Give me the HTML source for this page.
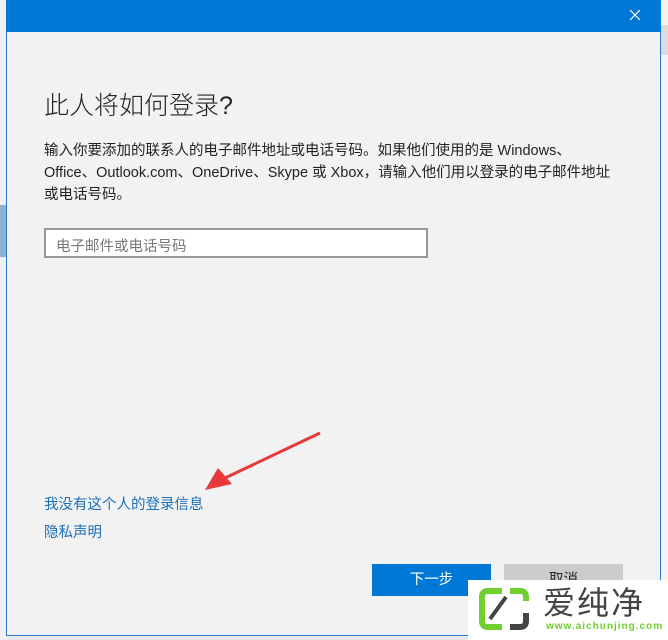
<!DOCTYPE html>
<html><head><meta charset="utf-8"><style>
body{margin:0;width:668px;height:640px;overflow:hidden;background:#e9e9e9;position:relative;font-family:"Liberation Sans","Noto Sans CJK SC",sans-serif}
.abs{position:absolute}
</style></head><body>
<div class="abs" style="left:0;top:0;width:7px;height:640px;background:#f0f0f0"></div>
<div class="abs" style="left:0;top:205px;width:7px;height:52px;background:#8fb0d6"></div>
<div class="abs" style="left:661px;top:0;width:7px;height:640px;background:#f4f4f4"></div>
<div class="abs" style="left:661px;top:25px;width:7px;height:30px;background:#ddd"></div>
<div class="abs" style="left:6px;top:0;width:655px;height:636px;background:#f2f2f2;border:1px solid #2b79c9;box-sizing:border-box"></div>
<div class="abs" style="left:6px;top:0;width:655px;height:32px;background:#0078d7"></div>
<svg class="abs" style="left:629px;top:9px" width="12" height="12"><path d="M1 1L11 11M11 1L1 11" stroke="#fff" stroke-width="1.2"/></svg>
<div class="abs" style="left:44px;top:86px;font-size:25px;color:#222;font-weight:300">此人将如何登录?</div>
<div class="abs" style="left:44px;top:140px;font-size:14.5px;line-height:22px;color:#222;white-space:nowrap">输入你要添加的联系人的电子邮件地址或电话号码。如果他们使用的是 Windows、<br>Office、Outlook.com、OneDrive、Skype 或 Xbox，请输入他们用以登录的电子邮件地址<br>或电话号码。</div>
<div class="abs" style="left:44px;top:228px;width:384px;height:30px;border:2px solid #999;box-sizing:border-box;background:#fff;font-size:14.5px;color:#777;padding:5px 0 0 10px">电子邮件或电话号码</div>
<svg class="abs" style="left:0;top:0" width="668" height="640"><line x1="320" y1="433" x2="225" y2="478" stroke="#e8393a" stroke-width="3"/><polygon points="205,490 218,468 232,484" fill="#e8393a"/></svg>
<div class="abs" style="left:44px;top:493px;font-size:14.5px;color:#1a6fb8">我没有这个人的登录信息</div>
<div class="abs" style="left:44px;top:521px;font-size:14.5px;color:#1a6fb8">隐私声明</div>
<div class="abs" style="left:372px;top:564px;width:119px;height:32px;background:#0078d7;color:#fff;font-size:14.5px;text-align:center;line-height:32px">下一步</div>
<div class="abs" style="left:504px;top:564px;width:119px;height:32px;background:#ccc;color:#222;font-size:14.5px;text-align:center;line-height:32px">取消</div>
<div class="abs" style="left:468px;top:580px;width:200px;height:60px;background:#fff"></div>
<svg class="abs" style="left:478px;top:587px" width="56" height="46"><path d="M24 4H10Q4 4 4 10V34Q4 40 10 40H24" fill="none" stroke="#6fcf2e" stroke-width="6"/><path d="M32 4H42Q48 4 48 10V14" fill="none" stroke="#6fcf2e" stroke-width="6"/><path d="M48 26V34Q48 40 42 40H32" fill="none" stroke="#444" stroke-width="6"/><line x1="12" y1="32" x2="28" y2="10" stroke="#444" stroke-width="4"/></svg>
<div class="abs" style="left:543px;top:585px;font-size:32px;line-height:36px;color:#444;letter-spacing:2px">爱纯净</div>
<div class="abs" style="left:546px;top:621px;font-size:10px;color:#6fcf2e;font-weight:bold;letter-spacing:1px">www.aichunjing.com</div>
</body></html>
